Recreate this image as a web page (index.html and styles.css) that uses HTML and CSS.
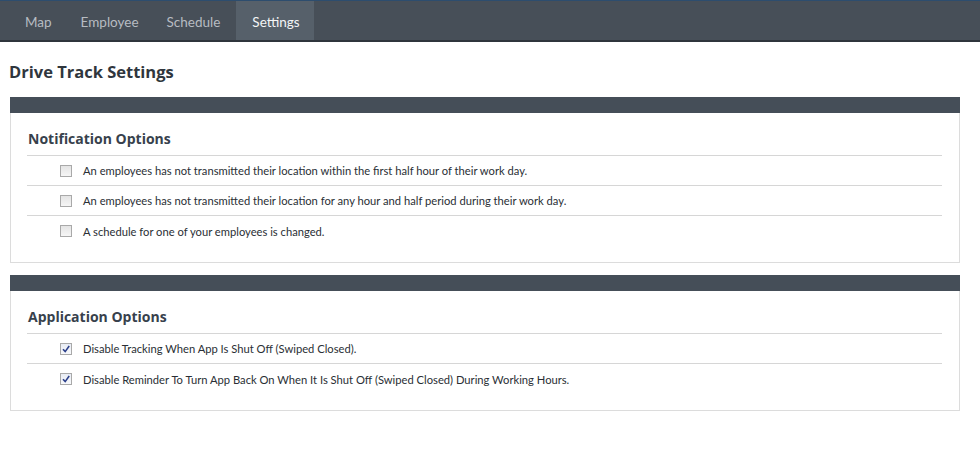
FILE: index.html
```html
<!DOCTYPE html>
<html lang="en">
<head>
<meta charset="utf-8">
<title>Drive Track Settings</title>
<link rel="stylesheet" href="styles.css">
</head>
<body>
<nav class="topnav">
  <a class="tab">Map</a>
  <a class="tab">Employee</a>
  <a class="tab">Schedule</a>
  <a class="tab active">Settings</a>
</nav>
<main class="page">
  <h1 class="page-title">Drive Track Settings</h1>

  <section class="panel">
    <div class="panel-bar"></div>
    <div class="panel-body">
      <h2 class="group-title">Notification Options</h2>
      <ul class="options">
        <li class="option"><span class="box"></span><span>An employees has not transmitted their location within the first half hour of their work day.</span></li>
        <li class="option"><span class="box"></span><span>An employees has not transmitted their location for any hour and half period during their work day.</span></li>
        <li class="option"><span class="box"></span><span>A schedule for one of your employees is changed.</span></li>
      </ul>
    </div>
  </section>

  <section class="panel">
    <div class="panel-bar"></div>
    <div class="panel-body">
      <h2 class="group-title">Application Options</h2>
      <ul class="options">
        <li class="option"><span class="box checked"><svg viewBox="0 0 10 10" width="10" height="10"><path d="M2 5.2 L4.2 7.6 L8.2 2" fill="none" stroke="#2b3f8a" stroke-width="1.6"/></svg></span><span>Disable Tracking When App Is Shut Off (Swiped Closed).</span></li>
        <li class="option"><span class="box checked"><svg viewBox="0 0 10 10" width="10" height="10"><path d="M2 5.2 L4.2 7.6 L8.2 2" fill="none" stroke="#2b3f8a" stroke-width="1.6"/></svg></span><span>Disable Reminder To Turn App Back On When It Is Shut Off (Swiped Closed) During Working Hours.</span></li>
      </ul>
    </div>
  </section>
</main>
</body>
</html>
```

FILE: styles.css
```css
* { box-sizing: border-box; }

body {
  margin: 0;
  background: #fff;
  font-family: "Open Sans", "Liberation Sans", sans-serif;
  color: #333a42;
}

.topnav {
  display: flex;
  height: 42px;
  padding-left: 9px;
  background: #474f58;
  border-top: 1px solid #2d4d6e;
  border-bottom: 2px solid #2f353c;
}

.tab {
  display: flex;
  align-items: center;
  padding: 2px 15px 0 16px;
  margin-right: -1px;
  font-family: "Lato", "Open Sans", sans-serif;
  font-size: 13.5px;
  color: #b7bcc2;
}

.tab:nth-child(2) { padding-left: 15px; padding-right: 14px; }
.tab:nth-child(3) { padding-left: 15px; padding-right: 17px; }

.tab.active {
  background: #56606a;
  color: #f4f5f6;
  padding: 2px 14px 0 16px;
}

.page {
  padding: 0 20px 0 10px;
}

.page-title {
  margin: 18px 0 14px -1px;
  font-size: 16.5px;
  font-weight: 700;
  color: #2f363d;
}

.panel {
  border: 1px solid #dcdcdc;
  border-top: none;
  margin-bottom: 12px;
}

.panel-bar {
  height: 16px;
  margin: 0 -1px;
  background: #454e58;
}

.panel-body {
  padding: 16px 17px 16px 16px;
}

.group-title {
  margin: 0;
  padding: 0 0 7px 1px;
  font-size: 14px;
  font-weight: 700;
  color: #37414c;
  border-bottom: 1px solid #d6d6d6;
}

.options {
  list-style: none;
  margin: 0;
  padding: 0;
}

.option {
  display: flex;
  align-items: center;
  gap: 11px;
  height: 30px;
  padding-left: 33px;
  font-family: "Lato", "Open Sans", sans-serif;
  font-size: 11.2px;
  color: #2a2f35;
  border-bottom: 1px solid #d6d6d6;
}

.option:last-child { border-bottom: none; }

.box {
  display: flex;
  align-items: center;
  justify-content: center;
  width: 12px;
  height: 12px;
  border: 1px solid #a9a9a9;
  background: linear-gradient(#e4e4e4, #f6f6f6);
}

.box.checked {
  background: linear-gradient(#e8ecf4, #f8f9fb);
}
```
